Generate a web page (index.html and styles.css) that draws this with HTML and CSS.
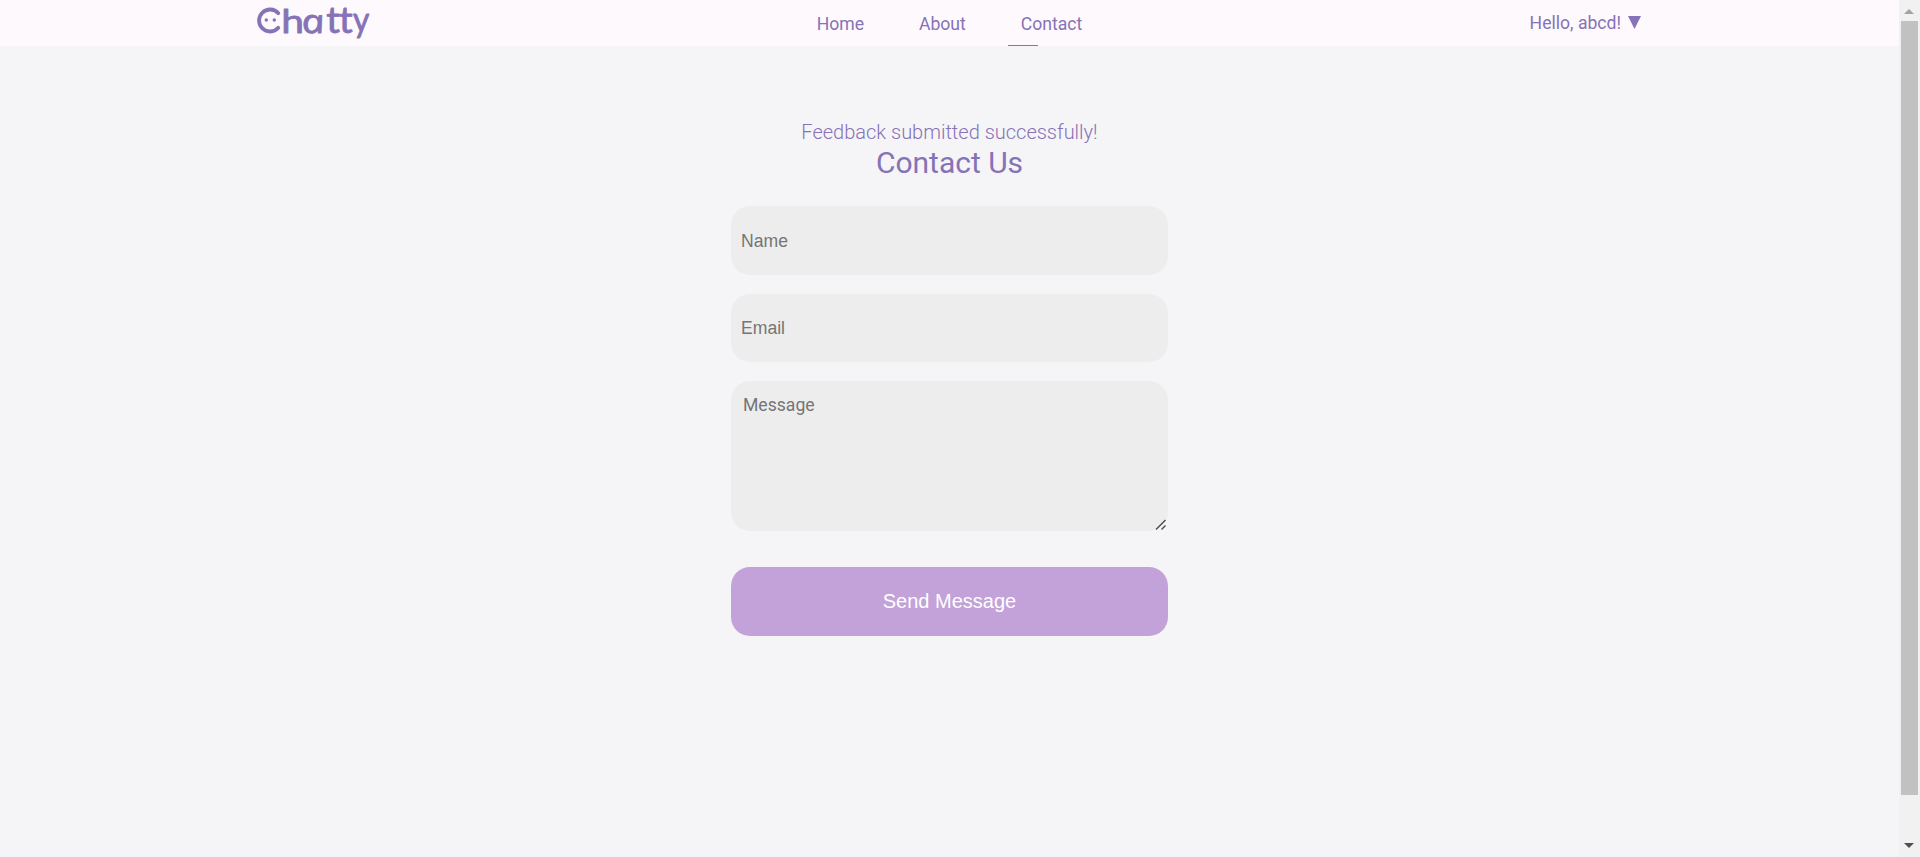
FILE: index.html
```html
<!DOCTYPE html>
<html lang="en">
<head>
<meta charset="utf-8">
<title>Chatty - Contact</title>
<link rel="stylesheet" href="styles.css">
</head>
<body>
<div class="page">
  <header class="navbar">
    <a class="logo">
      <svg width="116" height="46" viewBox="0 0 116 46" aria-label="Chatty">
        <path class="logo-face" d="M22.3 13.2A11 11 0 1 0 22.3 27.8"/>
        <circle class="logo-eye" cx="10.3" cy="20" r="1.7"/>
        <circle class="logo-eye" cx="18.3" cy="20" r="1.7"/>
        <text class="logo-text" transform="translate(25.2 32.5) scale(1.2 .95)">h</text>
        <text class="logo-text logo-round" transform="translate(47.6 32.5) skewX(12) scale(1.22 1)">a</text>
        <text class="logo-text" transform="translate(70.2 32.5) scale(1.12 1.06)">t</text>
        <text class="logo-text" transform="translate(82.9 32.5) scale(1.12 1.06)">t</text>
        <text class="logo-text" transform="translate(97 32) scale(.93 1)">y</text>
      </svg>
    </a>
    <nav class="links">
      <a class="link">Home</a>
      <a class="link">About</a>
      <a class="link active">Contact</a>
    </nav>
    <div class="user"><span>Hello, abcd!</span><svg width="13" height="13" viewBox="0 0 13 13"><path d="M0 0H13L6.5 13Z"/></svg></div>
  </header>
  <main class="contact">
    <p class="flash">Feedback submitted successfully!</p>
    <h1 class="title">Contact Us</h1>
    <form class="form">
      <input class="field" type="text" placeholder="Name">
      <input class="field email" type="text" placeholder="Email">
      <div class="message-wrap">
        <textarea class="field message" placeholder="Message"></textarea>
        <svg class="grip" width="12" height="12" viewBox="0 0 12 12"><path d="M1 10.5L10.5 1M6.5 10.5L10.5 6.5"/></svg>
      </div>
      <button class="send" type="button">Send Message</button>
    </form>
  </main>
</div>
<aside class="scrollbar">
  <svg class="arrow up" width="10" height="5" viewBox="0 0 10 5"><path d="M0 5L5 0L10 5Z"/></svg>
  <div class="thumb"></div>
  <svg class="arrow down" width="10" height="5" viewBox="0 0 10 5"><path d="M0 0H10L5 5Z"/></svg>
</aside>
</body>
</html>
```
FILE: styles.css
```css
* { box-sizing: border-box; }
body {
  margin: 0;
  height: 857px;
  display: flex;
  overflow: hidden;
  font-family: Roboto, sans-serif;
  color: #8672b6;
  background: #f5f5f8;
}
.page { flex: 1; }
.navbar {
  height: 46px;
  padding: 0 258px 0 256px;
  display: grid;
  grid-template-columns: 1fr auto 1fr;
  background: #fef9fd;
  font-size: 17.6px;
  line-height: 48px;
}
.logo svg { display: block; overflow: visible; }
.logo-face { fill: none; stroke: #8672b6; stroke-width: 3.8; stroke-linecap: round; }
.logo-eye { fill: #8672b6; }
.logo-text {
  font: 400 34px Lato, sans-serif;
  fill: #8672b6;
  stroke: #8672b6;
  stroke-width: 0.8;
  stroke-linejoin: round;
}
.logo-round { font: italic 400 33px "Open Sans", sans-serif; }
.links { display: flex; gap: 55px; padding-left: 2px; }
.active { position: relative; }
.active::after {
  content: "";
  position: absolute;
  left: -13px;
  top: 45px;
  width: 30px;
  height: 1px;
  background: #8672b6;
}
.user {
  display: flex;
  justify-content: flex-end;
  gap: 7px;
  line-height: 46px;
}
.user svg { fill: #8672b6; margin-top: 16px; }
.contact { width: 437px; margin: 74px auto 0; }
.flash {
  margin: 0;
  font-size: 20px;
  font-weight: 300;
  line-height: 24px;
  text-align: center;
}
.title {
  margin: 0 0 25px;
  padding-top: 1px;
  font-size: 30px;
  font-weight: 400;
  line-height: 36px;
  text-align: center;
}
.form { display: flex; flex-direction: column; }
.field {
  display: block;
  width: 100%;
  height: 69px;
  margin: 0 0 19px;
  padding: 1px 10px 0;
  border: 0;
  border-radius: 19px;
  background: #ededed;
  font: 17.6px "Liberation Sans", Arial, sans-serif;
}
.field::placeholder { color: #757575; opacity: 1; }
.email { height: 68px; padding-top: 0; }
.message-wrap { position: relative; margin-bottom: 36px; }
.message {
  height: 150px;
  margin: 0;
  padding: 14px 12px;
  resize: none;
  font-family: Roboto, sans-serif;
}
.grip {
  position: absolute;
  right: 1px;
  bottom: 0;
  fill: none;
  stroke: #4a4a4a;
  stroke-width: 1.4;
}
.send {
  height: 69px;
  border: 0;
  border-radius: 19px;
  background: #c3a2da;
  color: #fff;
  font: 20px "Liberation Sans", Arial, sans-serif;
}
.scrollbar {
  width: 21px;
  padding: 9px 3px 9px 2px;
  display: flex;
  flex-direction: column;
  align-items: center;
  background: #f1f1f1;
}
.arrow { flex: none; }
.up { fill: #a3a3a3; }
.down { fill: #505050; margin-top: auto; }
.thumb { width: 17px; height: 774px; margin-top: 7px; background: #c1c1c1; }
```
